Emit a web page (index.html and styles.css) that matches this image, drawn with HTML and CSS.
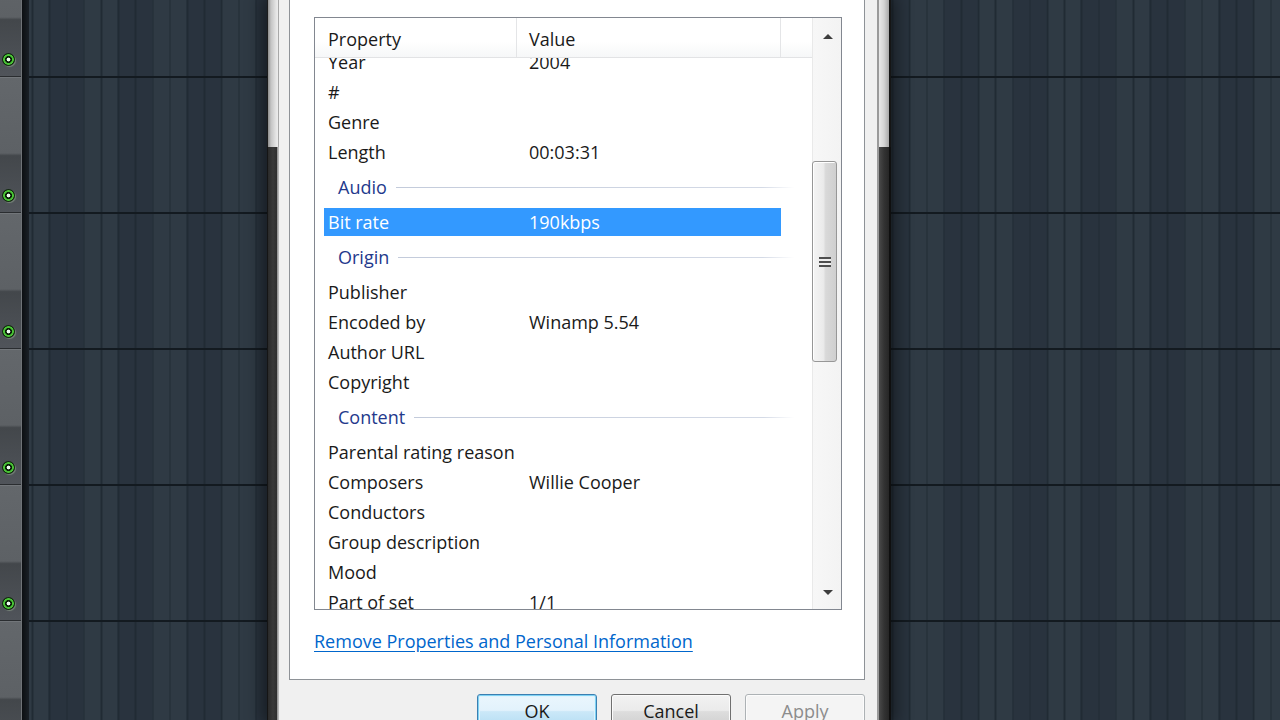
FILE: index.html
```html
<!DOCTYPE html>
<html>
<head>
<meta charset="utf-8">
<title>Properties</title>
<link rel="stylesheet" href="styles.css">
</head>
<body>
<div class="lpanel">
  <div class="seg first"><span class="led"></span></div>
  <div class="seg"><span class="led"></span></div>
  <div class="seg"><span class="led"></span></div>
  <div class="seg"><span class="led"></span></div>
  <div class="seg"><span class="led"></span></div>
  <div class="seg"><span class="led"></span></div>
</div>
<div class="divider"></div>
<div class="gap-left"></div>
<div class="dialog">
  <div class="frame frame-l"><div class="glass"></div><div class="dark"></div></div>
  <div class="dbody">
    <div class="tabpage">
      <div class="listview">
        <div class="lv-main">
          <div class="lv-header">
            <div class="hcol c1">Property</div>
            <div class="hcol c2">Value</div>
            <div class="hcol c3"></div>
          </div>
          <div class="lv-rows">
            <div class="row first"><span class="k">Year</span><span class="v">2004</span></div>
            <div class="row"><span class="k">#</span><span class="v"></span></div>
            <div class="row"><span class="k">Genre</span><span class="v"></span></div>
            <div class="row"><span class="k">Length</span><span class="v">00:03:31</span></div>
            <div class="group">Audio</div>
            <div class="row sel"><span class="k">Bit rate</span><span class="v">190kbps</span></div>
            <div class="group">Origin</div>
            <div class="row"><span class="k">Publisher</span><span class="v"></span></div>
            <div class="row"><span class="k">Encoded by</span><span class="v">Winamp 5.54</span></div>
            <div class="row"><span class="k">Author URL</span><span class="v"></span></div>
            <div class="row"><span class="k">Copyright</span><span class="v"></span></div>
            <div class="group">Content</div>
            <div class="row"><span class="k">Parental rating reason</span><span class="v"></span></div>
            <div class="row"><span class="k">Composers</span><span class="v">Willie Cooper</span></div>
            <div class="row"><span class="k">Conductors</span><span class="v"></span></div>
            <div class="row"><span class="k">Group description</span><span class="v"></span></div>
            <div class="row"><span class="k">Mood</span><span class="v"></span></div>
            <div class="row"><span class="k">Part of set</span><span class="v">1/1</span></div>
          </div>
        </div>
        <div class="vscroll">
          <div class="sbtn"><span class="arr up"></span></div>
          <div class="track"><div class="thumb"><span class="grip"></span></div></div>
          <div class="sbtn"><span class="arr down"></span></div>
        </div>
      </div>
      <a class="link" href="#">Remove Properties and Personal Information</a>
    </div>
    <div class="buttons">
      <button class="btn default">OK</button>
      <button class="btn">Cancel</button>
      <button class="btn disabled">Apply</button>
    </div>
  </div>
  <div class="frame frame-r"><div class="glass"></div><div class="dark"></div></div>
</div>
</body>
</html>
```

FILE: styles.css
```css
* { box-sizing: border-box; }

body {
  margin: 0;
  width: 1280px;
  height: 720px;
  overflow: hidden;
  display: flex;
  font-family: "Open Sans", "Noto Sans", sans-serif;
  background-color: #2a3540;
  background-image:
    repeating-linear-gradient(to bottom, transparent 0 76px, #131a20 76px 78px, transparent 78px 136px),
    repeating-linear-gradient(to right, #212b34 0 1.5px, transparent 1.5px 17.2px),
    repeating-linear-gradient(to right, rgba(255,255,255,0.025) 0 34.4px, rgba(0,0,0,0.035) 34.4px 68.8px);
  background-position: 0 0, 14.5px 0, 14.5px 0;
}

/* left mixer strip */
.lpanel {
  width: 22px;
  flex: none;
  display: flex;
  flex-direction: column;
  overflow: hidden;
  border-right: 1px solid #6f7377;
}
.seg {
  flex: none;
  height: 136px;
  display: flex;
  flex-direction: column;
  justify-content: flex-end;
  padding-bottom: 10px;
  background: linear-gradient(to bottom, #63676b 0, #5d6165 56%, #43474b 58%, #50545a 100%);
  border-top: 1px solid #72767a;
  border-bottom: 1px solid #2a2d30;
}
.seg.first { margin-top: -59px; }
.led {
  display: block;
  width: 13px;
  height: 13px;
  margin-left: 2px;
  border-radius: 50%;
  background: radial-gradient(circle, #f0fff0 0 1.6px, #0a1f07 2.2px 3.2px, #49c236 3.8px 5px, #112a0e 5.6px 6.5px);
  box-shadow: 1px 1px 1px rgba(200,230,190,0.35);
}

.divider {
  width: 7px;
  flex: none;
  background: linear-gradient(to right, #0c0f12, #1a2026);
}
.gap-left {
  width: 238px;
  flex: none;
}

/* dialog window */
.dialog {
  flex: none;
  width: 624px;
  height: 720px;
  display: flex;
  box-shadow: 0 0 16px 5px rgba(0,0,0,0.45);
}
.frame {
  flex: none;
  display: flex;
  flex-direction: column;
}
.frame .glass { height: 147px; }
.frame .dark { flex: 1; }
.frame-l { width: 12px; }
.frame-l .glass {
  background: linear-gradient(to right, #1d1d1d 0 1px, #8e8e8e 1px, #c4c4c4 4px, #e4e4e4 9px, #ececec 11px, #a8a8a8 11px);
}
.frame-l .dark {
  background: linear-gradient(to right, #151515 0 1px, #2a2a2a 1px, #3a3a3a 6px, #2f2f2f 10px, #8a8a8a 10px, #c8c8c8 12px);
}
.frame-r { width: 14px; }
.frame-r .glass {
  background: linear-gradient(to right, #9a9a9a 0 2px, #e8e8e8 2px, #d4d4d4 7px, #a8a8a8 12px, #151515 12px);
}
.frame-r .dark {
  background: linear-gradient(to right, #9a9a9a 0 2px, #4a4a4a 2px, #333333 7px, #262626 12px, #0f0f0f 12px);
}

.dbody {
  flex: none;
  width: 598px;
  background: #f0f0f0;
  padding: 0 12px 0 10px;
  display: flex;
  flex-direction: column;
}

.tabpage {
  flex: none;
  width: 576px;
  height: 680px;
  background: #ffffff;
  border: 1px solid #8e9297;
  border-top: none;
  padding: 17px 0 0 24px;
  display: flex;
  flex-direction: column;
}

/* list view */
.listview {
  flex: none;
  width: 528px;
  height: 593px;
  border: 1px solid #828790;
  display: flex;
  background: #fff;
}
.lv-main {
  flex: 1;
  display: flex;
  flex-direction: column;
  min-width: 0;
}
.lv-header {
  flex: none;
  height: 40px;
  display: flex;
  background: linear-gradient(to bottom, #ffffff 0, #ffffff 60%, #f6f7f8 100%);
  border-bottom: 1px solid #e2e3e5;
  font-size: 18px;
  color: #1a1a1a;
}
.hcol {
  padding-top: 9px;
  border-right: 1px solid #e4e5e7;
  white-space: nowrap;
}
.hcol.c1 { width: 202px; padding-left: 13px; }
.hcol.c2 { width: 264px; padding-left: 12px; }
.hcol.c3 { flex: 1; border-right: none; }

.lv-rows {
  flex: 1;
  overflow: hidden;
  font-size: 18px;
  color: #1a1a1a;
}
.row {
  display: grid;
  grid-template-columns: 193px 264px;
  align-items: center;
  width: 457px;
  height: 30px;
  margin-left: 9px;
  white-space: nowrap;
}
.row.first { margin-top: -11px; }
.row .k { padding-left: 4px; }
.row .v { padding-left: 12px; }
.row.sel {
  color: #ffffff;
  background: linear-gradient(to bottom, transparent 0 1px, #3399ff 1px 29px, transparent 29px);
}
.group {
  display: flex;
  align-items: center;
  width: 470px;
  height: 40px;
  margin-left: 9px;
  padding-left: 14px;
  color: #23398c;
  font-size: 18px;
}
.group::after {
  content: "";
  flex: 1;
  height: 1px;
  margin-left: 9px;
  background: linear-gradient(to right, #c3cbdb, #d4dae6 92%, rgba(220,226,236,0));
}

/* scrollbar */
.vscroll {
  flex: none;
  width: 29px;
  display: flex;
  flex-direction: column;
  background: linear-gradient(to right, #e9e9e9 0 1px, #f7f7f7 1px, #f3f3f3 100%);
}
.sbtn {
  flex: none;
  height: 34px;
  display: flex;
  align-items: center;
  justify-content: center;
  padding-left: 2px;
}
.arr {
  width: 0;
  height: 0;
  border-left: 5px solid transparent;
  border-right: 5px solid transparent;
}
.arr.up { border-bottom: 5px solid #3d3d3d; margin-top: 2px; }
.arr.down { border-top: 5px solid #3d3d3d; margin-top: 0; }
.track {
  flex: 1;
  padding-top: 109px;
}
.thumb {
  width: 25px;
  height: 201px;
  margin-left: 0;
  border: 1px solid #979797;
  border-radius: 3px;
  background: linear-gradient(to right, #f4f4f4 0, #ebebeb 45%, #d9d9d9 55%, #cfcfcf 100%);
  box-shadow: inset 1px 1px 0 #ffffff;
  display: flex;
  align-items: center;
  justify-content: center;
}
.grip {
  display: block;
  width: 12px;
  height: 10px;
  background: repeating-linear-gradient(to bottom, #4e4e4e 0 2px, #eeeeee 2px 4px);
}

.link {
  margin-top: 19px;
  align-self: flex-start;
  font-size: 18px;
  color: #0066cc;
  text-decoration: underline;
  text-underline-offset: 3px;
}

/* buttons */
.buttons {
  flex: none;
  margin-top: 14px;
  display: flex;
  justify-content: flex-end;
  gap: 14px;
}
.btn {
  width: 120px;
  height: 34px;
  padding: 0;
  font-family: "Open Sans", "Noto Sans", sans-serif;
  font-size: 18px;
  color: #1a1a1a;
  border: 1px solid #707070;
  border-radius: 3px;
  background: linear-gradient(to bottom, #f2f2f2 0, #ebebeb 48%, #dddddd 52%, #cfcfcf 100%);
  box-shadow: inset 0 0 0 1px #fbfbfb;
  padding-bottom: 0;
}
.btn.default {
  border-color: #3c7fb1;
  background: linear-gradient(to bottom, #eaf6fd 0, #e2f2fc 48%, #cbe8f8 52%, #b4ddf3 100%);
  box-shadow: inset 0 0 0 1px #7fd2f4, inset 0 0 0 2px #dff3fc;
}
.btn.disabled {
  color: #8c8c8c;
  border-color: #adb2b5;
  background: #f4f4f4;
  box-shadow: inset 0 0 0 1px #fcfcfc;
}
```
